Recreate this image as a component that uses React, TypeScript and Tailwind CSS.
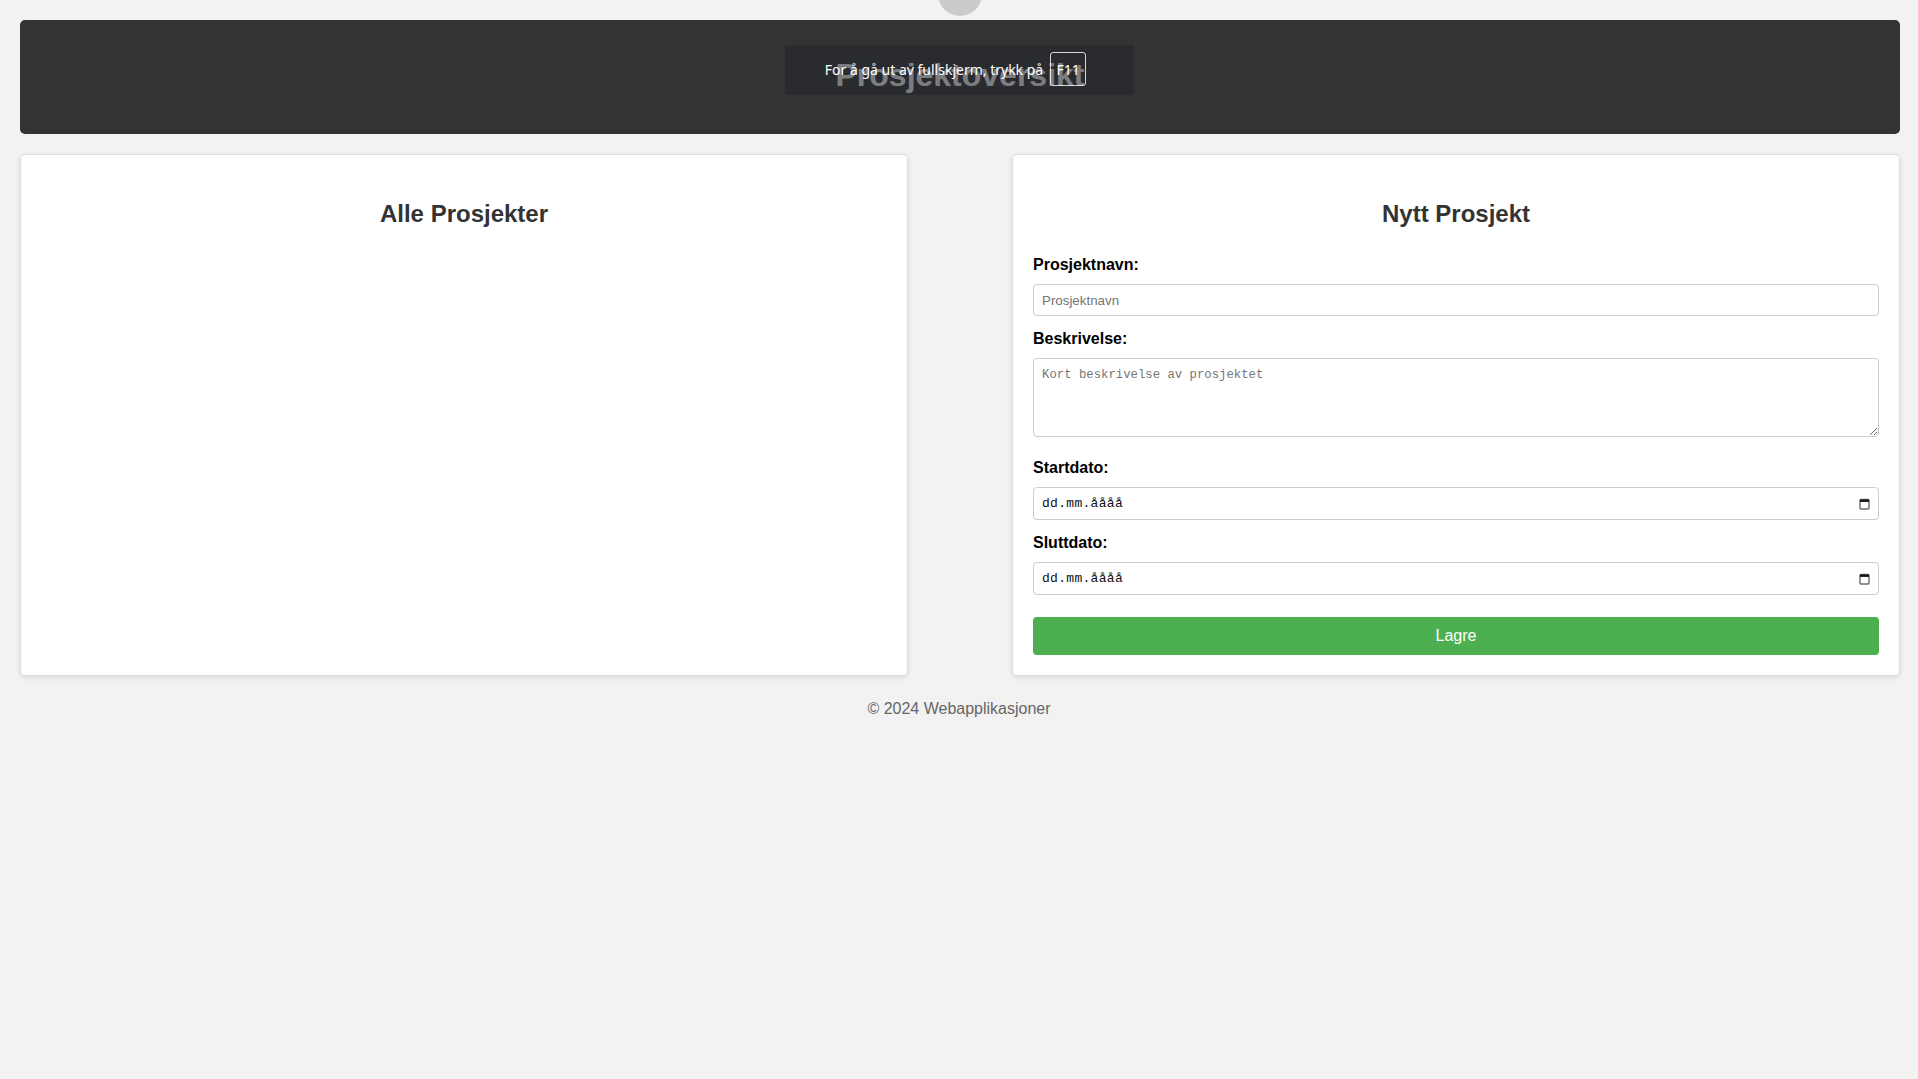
import { useState } from 'react';

function CalendarIcon() {
    return (
        <svg width="11" height="12" viewBox="0 0 11 12" className="shrink-0">
            <rect x="1" y="1.5" width="9" height="9.5" rx="1" fill="none" stroke="#6b6b6b" strokeWidth="1.4" />
            <rect x="1" y="1.5" width="9" height="2.4" fill="#111" />
        </svg>
    );
}

function DateField() {
    return (
        <div className="mt-[10px] h-[33px] border border-[#ccc] rounded-[4px] flex items-center justify-between pl-[8px] pr-[8px] bg-white">
            <span className="font-['Liberation_Mono',monospace] text-[13px] text-[#111] tracking-[0.3px]">dd.mm.åååå</span>
            <CalendarIcon />
        </div>
    );
}

export default function App() {
    const [name, setName] = useState('');
    const [desc, setDesc] = useState('');

    return (
        <div className="relative min-h-screen bg-[#f2f2f2] font-['Liberation_Sans',Arial,sans-serif] text-[#333] overflow-hidden">
            {/* Header */}
            <header className="ml-[20px] mr-[18px] mt-[20px] h-[114px] bg-[#333] rounded-[5px] flex items-center justify-center pb-[4px]">
                <h1 className="text-white text-[32px] font-bold leading-[37px]">Prosjektoversikt</h1>
            </header>

            {/* Fullscreen toast (browser chrome) */}
            <div className="absolute left-[785px] top-[45px] w-[349px] h-[50px] bg-[rgba(36,38,45,0.6)] flex items-center justify-center gap-[7px] pr-[8px] pb-[2px] font-['Noto_Sans',sans-serif] text-[14px] text-white">
                <span>For å gå ut av fullskjerm, trykk på</span>
                <span className="h-[34px] w-[36px] border border-white/80 rounded-[3px] flex items-center justify-center">F11</span>
            </div>
            <div className="absolute left-[938px] top-[-28px] w-[44px] h-[44px] rounded-full bg-[#cbcbcd]" />

            {/* Cards */}
            <main className="mt-[20px] pl-[20px] pr-[18px] flex justify-between">
                <section className="w-[888px] bg-white border border-[#ddd] rounded-[5px] shadow-[0_2px_5px_rgba(0,0,0,0.1)] p-[20px]">
                    <h2 className="mt-[25px] text-center text-[24px] font-bold leading-[28px] text-[#333]">Alle Prosjekter</h2>
                </section>

                <section className="w-[888px] bg-white border border-[#ddd] rounded-[5px] shadow-[0_2px_5px_rgba(0,0,0,0.1)] p-[20px] flex flex-col">
                    <h2 className="mt-[25px] text-center text-[24px] font-bold leading-[28px] text-[#333]">Nytt Prosjekt</h2>

                    <label className="mt-[28px] text-[16px] font-bold leading-[18px] text-black">Prosjektnavn:</label>
                    <input
                        value={name}
                        onChange={e => setName(e.target.value)}
                        placeholder="Prosjektnavn"
                        className="mt-[10px] h-[32px] border border-[#ccc] rounded-[4px] px-[8px] text-[13.33px] text-black placeholder:text-[#757575] outline-none"
                    />

                    <label className="mt-[14px] text-[16px] font-bold leading-[18px] text-black">Beskrivelse:</label>
                    <textarea
                        value={desc}
                        onChange={e => setDesc(e.target.value)}
                        placeholder="Kort beskrivelse av prosjektet"
                        className="mt-[10px] h-[79px] border border-[#ccc] rounded-[4px] px-[8px] pt-[9px] pb-[8px] font-['Liberation_Mono',monospace] text-[12.3px] leading-[15px] text-black placeholder:text-[#757575] outline-none"
                    />

                    <label className="mt-[22px] text-[16px] font-bold leading-[18px] text-black">Startdato:</label>
                    <DateField />

                    <label className="mt-[14px] text-[16px] font-bold leading-[18px] text-black">Sluttdato:</label>
                    <DateField />

                    <button className="mt-[22px] h-[38px] bg-[#4caf50] text-white text-[16px] rounded-[4px]">Lagre</button>
                </section>
            </main>

            <footer className="mt-[24px] text-center text-[16px] leading-[18px] text-[#666]">© 2024 Webapplikasjoner</footer>
        </div>
    );
}
